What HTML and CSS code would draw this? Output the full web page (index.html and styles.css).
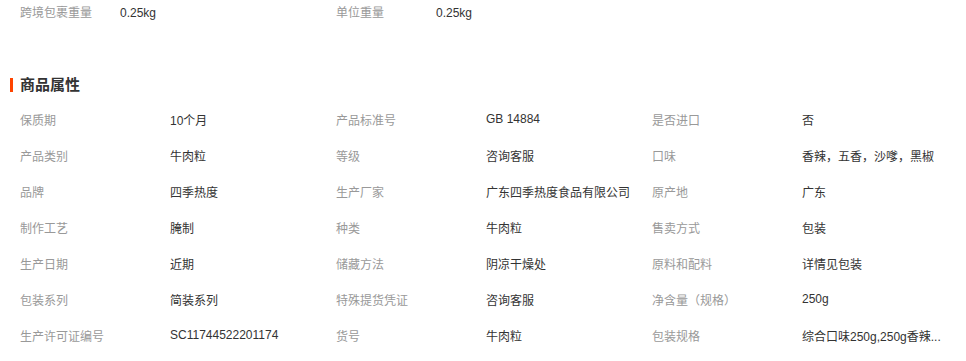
FILE: index.html
```html
<!DOCTYPE html>
<html lang="zh">
<head>
<meta charset="utf-8">
<link rel="stylesheet" href="styles.css">
</head>
<body>
<div class="page">
  <div class="top-grid">
    <div class="item"><span class="label short">跨境包裹重量</span><span class="value">0.25kg</span></div>
    <div class="item"><span class="label short">单位重量</span><span class="value">0.25kg</span></div>
  </div>

  <h2 class="title">商品属性</h2>

  <div class="attr-grid">
    <div class="item"><span class="label">保质期</span><span class="value">10个月</span></div>
    <div class="item"><span class="label">产品标准号</span><span class="value">GB 14884</span></div>
    <div class="item"><span class="label">是否进口</span><span class="value">否</span></div>

    <div class="item"><span class="label">产品类别</span><span class="value">牛肉粒</span></div>
    <div class="item"><span class="label">等级</span><span class="value">咨询客服</span></div>
    <div class="item"><span class="label">口味</span><span class="value">香辣，五香，沙嗲，黑椒</span></div>

    <div class="item"><span class="label">品牌</span><span class="value">四季热度</span></div>
    <div class="item"><span class="label">生产厂家</span><span class="value">广东四季热度食品有限公司</span></div>
    <div class="item"><span class="label">原产地</span><span class="value">广东</span></div>

    <div class="item"><span class="label">制作工艺</span><span class="value">腌制</span></div>
    <div class="item"><span class="label">种类</span><span class="value">牛肉粒</span></div>
    <div class="item"><span class="label">售卖方式</span><span class="value">包装</span></div>

    <div class="item"><span class="label">生产日期</span><span class="value">近期</span></div>
    <div class="item"><span class="label">储藏方法</span><span class="value">阴凉干燥处</span></div>
    <div class="item"><span class="label">原料和配料</span><span class="value">详情见包装</span></div>

    <div class="item"><span class="label">包装系列</span><span class="value">简装系列</span></div>
    <div class="item"><span class="label">特殊提货凭证</span><span class="value">咨询客服</span></div>
    <div class="item"><span class="label">净含量（规格）</span><span class="value">250g</span></div>

    <div class="item"><span class="label">生产许可证编号</span><span class="value">SC11744522201174</span></div>
    <div class="item"><span class="label">货号</span><span class="value">牛肉粒</span></div>
    <div class="item"><span class="label">包装规格</span><span class="value" title="综合口味250g,250g香辣,250g五香,250g沙嗲,250g黑椒">综合口味250g,250g香辣...</span></div>
  </div>
</div>
</body>
</html>
```

FILE: styles.css
```css
* { box-sizing: border-box; }
html, body { margin: 0; padding: 0; background: #fff; }
body {
  font-family: "Liberation Sans", "Noto Sans CJK SC", sans-serif;
  font-size: 12px;
  color: #333;
}
.page { padding: 0 0 0 20px; }
.top-grid {
  display: grid;
  grid-template-columns: repeat(2, 316px);
  height: 26px;
  line-height: 26px;
}
.attr-grid {
  display: grid;
  grid-template-columns: repeat(3, 316px);
  grid-auto-rows: 36px;
}
.item {
  display: flex;
  align-items: center;
  white-space: nowrap;
  min-width: 0;
}
.label {
  color: #999;
  width: 150px;
  flex: none;
}
.label.short { width: 100px; }
.value {
  color: #333;
}
.title {
  position: relative;
  margin: 49px 0 6px -10px;
  padding-left: 10px;
  font-size: 15px;
  font-weight: bold;
  line-height: 20px;
  color: #333;
}
.title::before {
  content: "";
  position: absolute;
  left: 0;
  top: 3px;
  width: 3px;
  height: 14px;
  background: #ff4400;
}
```
